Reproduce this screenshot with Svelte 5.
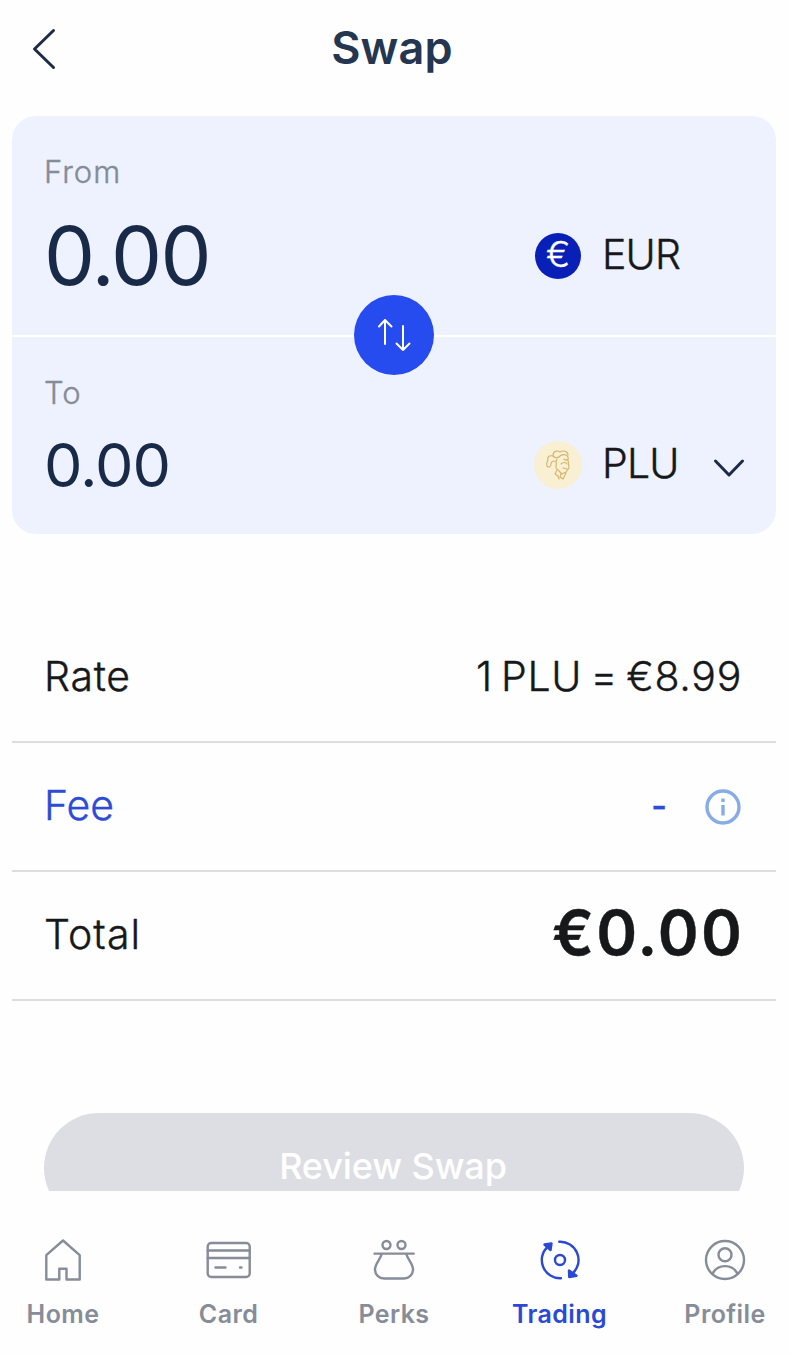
<script>
	let from = $state({ code: 'EUR', amount: '0.00' });
	let to = $state({ code: 'PLU', amount: '0.00' });
	let active = $state('Trading');

	const tabs = ['Home', 'Card', 'Perks', 'Trading', 'Profile'];

	function swap() {
		const previous = from;
		from = to;
		to = previous;
	}
</script>

{#snippet coin(code)}
	{#if code === 'EUR'}
		<span class="coin eur">€</span>
	{:else}
		<svg class="coin" viewBox="0 0 48 48" fill="none">
			<circle cx="24" cy="24" r="24" fill="#f9efd2" />
			<g stroke="#d3b36a" stroke-width="1.1" stroke-linecap="round" stroke-linejoin="round">
				<path d="M19 15c0-5 4-6 7-4 3-2 8-1 8 3M19 15c3 3 5 2 7 0 3-2 6-2 8 1 1 3-2 4-4 2" />
				<path d="M19 15c-4-1-6 1-5 4-1 2-2 4-1 6 2 2 4 1 4-2 0-2 2-3 4-3" />
				<path d="M23 18c-2 3 0 4-1 7s2 3 3 5l3 3 4-2 3-4-1-8M27 23c2-2 5-2 6 0M29 27l4 1M23 29l-2 4 3 2 1 3M27 33l-1 3 3 2 3-6" />
			</g>
		</svg>
	{/if}
{/snippet}

<div class="app">
	<header>
		<button class="back" aria-label="Back">
			<svg width="24" height="42" viewBox="0 0 24 42"><path d="M21.5 2.5 2.5 21l19 18.5" /></svg>
		</button>
		<h1>Swap</h1>
	</header>

	<main>
		<section class="exchange">
			<div class="side from">
				<span class="label">From</span>
				<div class="line">
					<span class="amount">{from.amount}</span>
					<div class="currency">
						{@render coin(from.code)}
						<span class="code">{from.code}</span>
					</div>
				</div>
			</div>
			<div class="side to">
				<span class="label">To</span>
				<div class="line">
					<span class="amount">{to.amount}</span>
					<div class="currency">
						{@render coin(to.code)}
						<span class="code">{to.code}</span>
						<svg class="chevron" width="32" height="20" viewBox="0 0 32 20"><path d="m2.5 3 13.5 14L29.5 3" /></svg>
					</div>
				</div>
			</div>
			<button class="switch" aria-label="Switch currencies" onclick={swap}>
				<svg width="80" height="80" viewBox="0 0 80 80">
					<path d="M31 49V25m-6 6.5 6-6.5 6.5 6.5M49 31v24m-6.5-6.5L49 55l6.5-6.5" />
				</svg>
			</button>
		</section>

		<section class="details">
			<div class="row">
				<span>Rate</span>
				<span class="rate">1 PLU = €8.99</span>
			</div>
			<div class="row fee">
				<span>Fee</span>
				<div class="fee-value">
					<span class="dash">-</span>
					<svg width="36" height="36" viewBox="0 0 36 36">
						<circle cx="18" cy="18" r="16" fill="none" stroke="#86ace5" stroke-width="3.4" />
						<path d="M18 9.500v3.500M18 16v10.500" stroke="#86ace5" stroke-width="3.4" />
					</svg>
				</div>
			</div>
			<div class="row total">
				<span>Total</span>
				<strong>€0.00</strong>
			</div>
		</section>

		<button class="review" disabled>Review Swap</button>
	</main>

	<nav>
		{#each tabs as tab}
			<button class="tab" class:active={tab === active} onclick={() => (active = tab)}>
				<svg width="48" height="48" viewBox="0 0 48 48">
					{#if tab === 'Home'}
						<path d="M24 4.5 7.3 19.200V43.500h13V32.800h7.200v10.700h13.200V19.200z" />
					{:else if tab === 'Card'}
						<rect x="2.7" y="7" width="42" height="34" rx="3.5" />
						<path d="M2.700 14.500h42M2.700 22h42M10.500 31.500h10M35 31.500h1.500" />
					{:else if tab === 'Perks'}
						<circle cx="16.5" cy="9" r="4" />
						<circle cx="31.5" cy="9" r="4" />
						<path d="M4.500 17.600h39.200M11.700 18C10.500 23 5 28 5 33.500c0 5 4 9 9 9h20c5 0 9-4 9-9C43 28 37.500 23 36.300 18" />
					{:else if tab === 'Trading'}
						<circle cx="24" cy="24" r="5" />
						<path d="M25 42.200A18.200 18.200 0 0 1 11.500 10.800M23.200 5.800A18.200 18.200 0 0 1 36.500 37.500" />
						<path class="head" d="m8.500 8.500 7-1-1 6.500zM33 34.500l.2 6.500 7.300-1.300z" />
					{:else}
						<circle cx="24" cy="24" r="19" />
						<circle cx="24" cy="18.8" r="6.5" />
						<path d="M11.500 37.800c5-10.200 20-10.200 25 0" />
					{/if}
				</svg>
				<span>{tab}</span>
			</button>
		{/each}
	</nav>
</div>

<style>
	:global(body) {
		margin: 0;
		background: #fefefe;
	}

	button {
		padding: 0;
		border: 0;
		background: none;
		font: inherit;
		color: inherit;
		cursor: pointer;
	}

	svg {
		display: block;
		flex: none;
	}

	.app {
		display: flex;
		flex-direction: column;
		width: 791px;
		height: 1355px;
		overflow: hidden;
		font-family: Inter, 'Liberation Sans', sans-serif;
		color: #17181a;
	}

	header {
		display: grid;
		grid-template-columns: 80px 1fr 80px;
		align-items: center;
		height: 98px;
		margin-bottom: 18px;
		flex: none;
	}

	.back {
		padding-left: 32px;
	}

	.back path,
	.chevron path {
		fill: none;
		stroke: #1d2b45;
		stroke-width: 3;
		stroke-linecap: round;
		stroke-linejoin: round;
	}

	h1 {
		margin: 0;
		padding: 0 7px 3px 0;
		text-align: center;
		font-size: 45px;
		font-weight: 600;
		letter-spacing: 0.2px;
		color: #243650;
	}

	main {
		flex: none;
		height: 1075px;
		overflow: hidden;
		padding: 0 15px 0 12px;
	}

	.exchange {
		position: relative;
		border-radius: 24px;
		overflow: hidden;
		background: #eef2ff;
	}

	.side {
		box-sizing: border-box;
		padding: 36px 32px 0;
	}

	.from {
		height: 219px;
	}

	.to {
		height: 199px;
		border-top: 2px solid #fff;
	}

	.label {
		display: block;
		line-height: 40px;
		font-size: 31px;
		font-weight: 300;
		letter-spacing: 1px;
		color: #858b98;
		-webkit-text-stroke: 0.4px;
	}

	.line {
		display: flex;
		align-items: center;
		justify-content: space-between;
	}

	.from .line {
		height: 127px;
	}

	.to .line {
		height: 104px;
	}

	.amount {
		color: #182a47;
		font-size: 81px;
		font-weight: 400;
		letter-spacing: -1.6px;
	}

	.to .amount {
		font-size: 61px;
		letter-spacing: -1px;
	}

	.currency {
		display: flex;
		align-items: center;
		width: 210px;
		font-size: 41px;
		font-weight: 300;
		-webkit-text-stroke: 0.4px;
	}

	.code {
		padding-bottom: 4px;
		letter-spacing: -0.8px;
	}

	.coin {
		width: 48px;
		height: 48px;
		margin-right: 20px;
	}

	.coin.eur {
		width: 46px;
		height: 46px;
		margin: 0 21px 0 1px;
		border-radius: 50%;
		background: #0820b8;
		color: #fff;
		font-size: 36px;
		line-height: 43px;
		text-align: center;
	}

	.chevron {
		margin: 5px -1px 0 auto;
	}

	.switch {
		position: absolute;
		top: 179px;
		left: 342px;
		width: 80px;
		height: 80px;
		border-radius: 50%;
		background: #264bee;
	}

	.switch path {
		fill: none;
		stroke: #fff;
		stroke-width: 2;
		stroke-linecap: round;
		stroke-linejoin: round;
	}

	.details {
		margin-top: 80px;
	}

	.row {
		box-sizing: border-box;
		display: flex;
		align-items: center;
		justify-content: space-between;
		height: 129px;
		padding: 0 35px 3px 32px;
		border-bottom: 2px solid #dddddf;
		font-size: 41px;
		font-weight: 300;
		letter-spacing: 0.7px;
		-webkit-text-stroke: 0.4px;
	}

	.rate {
		word-spacing: -4px;
		margin-right: -1px;
	}

	.fee {
		color: #2d4bd6;
		letter-spacing: 0;
	}

	.fee-value {
		display: flex;
		align-items: center;
		gap: 38px;
	}

	.dash {
		font-size: 34px;
		font-weight: 500;
	}

	.fee-value svg {
		margin-top: 3px;
	}

	.total {
		letter-spacing: 1.1px;
	}

	.total strong {
		padding-bottom: 3px;
		margin-right: -3px;
		font-size: 62px;
		font-weight: 600;
		letter-spacing: 2.2px;
	}

	.review {
		display: block;
		width: 700px;
		height: 110px;
		padding: 0 2px 4px 0;
		margin: 112px 0 0 32px;
		border-radius: 55px;
		background: #dddee4;
		color: #fff;
		font-size: 36px;
		font-weight: 500;
		letter-spacing: -0.1px;
	}

	nav {
		display: flex;
		justify-content: space-between;
		padding: 45px 16px 0 13px;
	}

	.tab {
		display: flex;
		flex-direction: column;
		align-items: center;
		width: 100px;
		color: #868c98;
		font-size: 25px;
		font-weight: 560;
		letter-spacing: 0.4px;
	}

	.tab span {
		margin-top: 15px;
		line-height: 30px;
	}

	.tab.active {
		color: #2b49d4;
	}

	.tab svg {
		fill: none;
		stroke: currentColor;
		stroke-width: 2.4;
		stroke-linecap: round;
		stroke-linejoin: round;
	}

	.head {
		fill: currentColor;
	}
</style>
